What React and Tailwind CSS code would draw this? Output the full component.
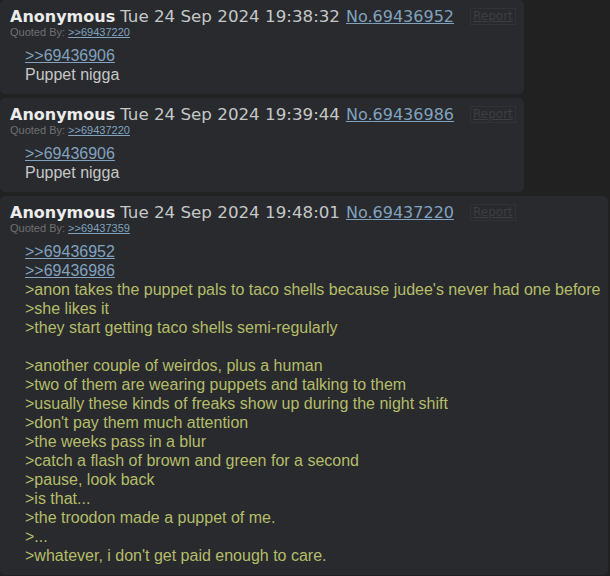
import React from 'react';

const posts = [
  {
    id: '69436952',
    date: 'Tue 24 Sep 2024 19:38:32',
    quotedBy: '69437220',
    lines: [
      { type: 'link', text: '>>69436906' },
      { type: 'text', text: 'Puppet nigga' },
    ],
  },
  {
    id: '69436986',
    date: 'Tue 24 Sep 2024 19:39:44',
    quotedBy: '69437220',
    lines: [
      { type: 'link', text: '>>69436906' },
      { type: 'text', text: 'Puppet nigga' },
    ],
  },
  {
    id: '69437220',
    date: 'Tue 24 Sep 2024 19:48:01',
    quotedBy: '69437359',
    lines: [
      { type: 'link', text: '>>69436952' },
      { type: 'link', text: '>>69436986' },
      { type: 'green', text: ">anon takes the puppet pals to taco shells because judee's never had one before" },
      { type: 'green', text: '>she likes it' },
      { type: 'green', text: '>they start getting taco shells semi-regularly' },
      { type: 'blank', text: '' },
      { type: 'green', text: '>another couple of weirdos, plus a human' },
      { type: 'green', text: '>two of them are wearing puppets and talking to them' },
      { type: 'green', text: '>usually these kinds of freaks show up during the night shift' },
      { type: 'green', text: ">don't pay them much attention" },
      { type: 'green', text: '>the weeks pass in a blur' },
      { type: 'green', text: '>catch a flash of brown and green for a second' },
      { type: 'green', text: '>pause, look back' },
      { type: 'green', text: '>is that...' },
      { type: 'green', text: '>the troodon made a puppet of me.' },
      { type: 'green', text: '>...' },
      { type: 'green', text: ">whatever, i don't get paid enough to care." },
    ],
  },
];

const Line = ({ line }) => {
  if (line.type === 'link') {
    return (
      <div>
        <a className="text-[#81a2be] underline">{line.text}</a>
      </div>
    );
  }
  if (line.type === 'green') {
    return <div className="text-[#b5bd68]">{line.text}</div>;
  }
  if (line.type === 'blank') {
    return <div className="h-[19px]" />;
  }
  return <div className="text-[#c5c8c6]">{line.text}</div>;
};

const Post = ({ post }) => (
  <div className="w-fit bg-[#282a2e] rounded-[5px] pt-[7px] pb-[10px] pl-[10px] pr-[8px]">
    <div className="flex items-center font-['DejaVu_Sans',sans-serif] text-[16px] leading-[19px] text-[#c5c8c6] whitespace-nowrap">
      <span className="font-bold text-[#ececec]">Anonymous</span>
      <span className="ml-[5px] text-[16.7px]">{post.date}</span>
      <a className="ml-[6px] text-[#81a2be] underline">No.{post.id}</a>
      <span className="ml-[16px] text-[12px] leading-[15px] px-[2px] border border-[#303236] text-[#3c3e42] underline">
        Report
      </span>
    </div>
    <div className="text-[11px] leading-[13px] text-[#707070]">
      Quoted By: <a className="text-[#81a2be] underline">&gt;&gt;{post.quotedBy}</a>
    </div>
    <div className="mt-[7px] ml-[15px] text-[16px] leading-[19px] whitespace-nowrap">
      {post.lines.map((line, i) => (
        <Line key={i} line={line} />
      ))}
    </div>
  </div>
);

const App = () => {
  return (
    <div className="min-h-[576px] bg-[#212121] font-['Liberation_Sans',Arial,sans-serif] flex flex-col gap-[4px] overflow-hidden">
      {posts.map((post) => (
        <Post key={post.id} post={post} />
      ))}
    </div>
  );
};

export default App;
